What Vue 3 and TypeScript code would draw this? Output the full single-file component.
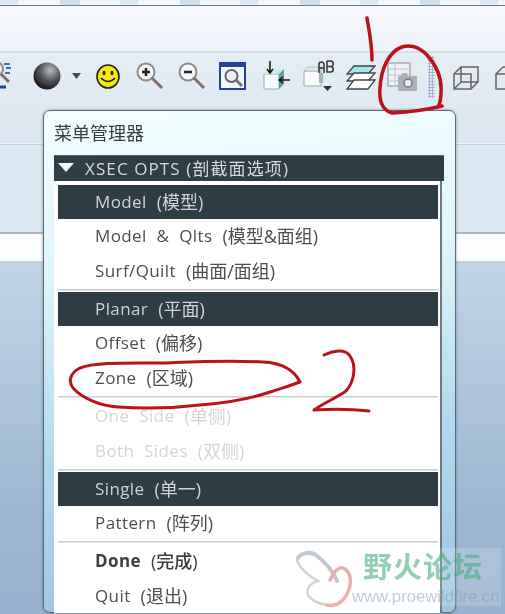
<script setup lang="ts">
interface Row { name: string; cn: string; kind?: 'on' | 'off' | 'bold'; sep?: boolean }
const rows: Row[] = [
  { name: 'Model', cn: '(模型)', kind: 'on' },
  { name: 'Model & Qlts', cn: '(模型&面组)' },
  { name: 'Surf/Quilt', cn: '(曲面/面组)', sep: true },
  { name: 'Planar', cn: '(平面)', kind: 'on' },
  { name: 'Offset', cn: '(偏移)' },
  { name: 'Zone', cn: '(区域)', sep: true },
  { name: 'One Side', cn: '(单侧)', kind: 'off' },
  { name: 'Both Sides', cn: '(双侧)', kind: 'off', sep: true },
  { name: 'Single', cn: '(单一)', kind: 'on' },
  { name: 'Pattern', cn: '(阵列)', sep: true },
  { name: 'Done', cn: '(完成)', kind: 'bold' },
  { name: 'Quit', cn: '(退出)' }
]
</script>

<template>
  <div class="page">
    <div class="bands">
      <div class="b-top"></div>
      <div class="b-white"></div>
      <div class="b-tool">
        <div class="icons">
          <svg width="28" height="36" viewBox="0 0 28 36"><circle cx="6" cy="10" r="7" fill="#eef2f5" stroke="#8d8d8d" stroke-width="2"/><path d="M11 15l8 8" stroke="#8a6a60" stroke-width="3"/><path d="M14 5h6M16 9h5M15 14h5" stroke="#3f6fb0" stroke-width="2"/><path d="M10 28h6" stroke="#1c3f9c" stroke-width="3"/></svg>
          <svg width="28" height="28" class="sphere" viewBox="0 0 28 28"><defs><radialGradient id="sph" cx="62%" cy="30%" r="75%"><stop offset="0" stop-color="#b8bcc0"/><stop offset=".5" stop-color="#55585c"/><stop offset="1" stop-color="#111"/></radialGradient></defs><circle cx="14" cy="14" r="13.500" fill="url(#sph)"/></svg>
          <svg width="10" height="7" class="caret" viewBox="0 0 10 7"><path d="M0 0h9l-4.500 6z" fill="#3f4c5a"/></svg>
          <svg width="24" height="25" class="smile" viewBox="0 0 24 25"><ellipse cx="12" cy="12.500" rx="11" ry="11.500" fill="#f5ea10" stroke="#222" stroke-width="1.600"/><ellipse cx="8" cy="9" rx="1.500" ry="2.200" fill="#222"/><ellipse cx="16" cy="9" rx="1.500" ry="2.200" fill="#222"/><path d="M5 14q7 7 14 0" fill="none" stroke="#222" stroke-width="1.600"/></svg>
          <svg width="28" height="28" class="zp" viewBox="0 0 28 28"><circle cx="10" cy="10" r="8.500" fill="#f4f6f8" stroke="#8b8b8b" stroke-width="2"/><path d="M6 10h8M10 6v8" stroke="#222" stroke-width="2.500"/><path d="M16 16l10 10" stroke="#85706a" stroke-width="3"/></svg>
          <svg width="28" height="28" class="zm" viewBox="0 0 28 28"><circle cx="10" cy="10" r="8.500" fill="#f4f6f8" stroke="#8b8b8b" stroke-width="2"/><path d="M6 10h8" stroke="#222" stroke-width="2.500"/><path d="M16 16l10 10" stroke="#85706a" stroke-width="3"/></svg>
          <svg width="28" height="28" class="win" viewBox="0 0 28 28"><rect x="1" y="1" width="25" height="26" fill="#f4f6fa" stroke="#23478f" stroke-width="2"/><rect x="1" y="1" width="25" height="4" fill="#23478f"/><circle cx="12.500" cy="14" r="6" fill="#eef2f5" stroke="#666" stroke-width="2"/><path d="M17 18l6 6" stroke="#85706a" stroke-width="3"/></svg>
          <svg width="29" height="30" class="box" viewBox="0 0 29 30"><path d="M2 13h15v15H2z" fill="#fbfdfd" stroke="#9aa" /><path d="M2 13l5-5h15l-5 5z" fill="#cfe9e9"/><path d="M17 13l5-5v15l-5 5z" fill="#5d9f9f"/><path d="M8 0v11M5 8l3 4 3-4" stroke="#111" stroke-width="1.500" fill="none"/><path d="M28 19H17M21 16l-4 3 4 3" stroke="#111" stroke-width="1.500" fill="none"/></svg>
          <svg width="31" height="31" class="ab" viewBox="0 0 31 31"><path d="M1 11h17v15H1z" fill="#fbfdfd" stroke="#9aa"/><path d="M1 11l4-4h13v4z" fill="#d8ecec" stroke="#aaa" stroke-width=".6"/><path d="M16 13h4v10h-4z" fill="#9fb6b6"/><path d="M16 13V4.500a2.500 2.500 0 015 0V13M16 8h5M24 1v11h3.500a2.500 2.500 0 000-5.500H24M27.500 6.500a2.500 2.500 0 000-5.500H24" fill="none" stroke="#333" stroke-width="1.500"/><path d="M20 26h9l-4.500 5z" fill="#333"/></svg>
          <svg width="30" height="26" class="layers" viewBox="0 0 30 26"><path d="M8 1h21l-7 8H1z" fill="#a2e7ee" stroke="#444" stroke-width="1.300"/><path d="M8 8h21l-7 8H1l7-8z" fill="#fff" stroke="#444" stroke-width="1.300"/><path d="M8 15h21l-7 9H1z" fill="#fff" stroke="#444" stroke-width="1.300"/></svg>
          <svg width="32" height="30" class="photo" viewBox="0 0 32 30"><path d="M1 1h22v23H1z" fill="#eef3f6" stroke="#a4adb4" stroke-width="1.500"/><path d="M1 7h22M1 13h22M1 19h22M8 1v23" stroke="#bcc5cb"/><path d="M11 14h3l1-3h5l1 3h9v15H11z" fill="#a9b0b6"/><circle cx="21" cy="21" r="4" fill="#e8ecef" stroke="#777" stroke-width="1.500"/></svg>
          <div class="dots"></div>
          <svg width="26" height="24" class="cube" viewBox="0 0 26 24"><path d="M1 8h17v15H1zM1 8l7-7h17v15l-7 7M8 1v15h17M1 23l7-7" fill="none" stroke="#666" stroke-width="1.500"/></svg>
          <svg width="26" height="24" class="cube2" viewBox="0 0 26 24"><path d="M1 8h17v15H1zM1 8l7-7h17v15l-7 7" fill="none" stroke="#666" stroke-width="1.500"/></svg>
        </div>
      </div>
      <div class="b-pale"></div>
      <div class="b-input"></div>
      <div class="b-blue"></div>
    </div>

    <section class="dialog">
      <h1 class="title">菜单管理器</h1>
      <div class="head"><span class="tri"></span><span class="head-text">XSEC OPTS (剖截面选项)</span></div>
      <ul class="panel">
        <li v-for="r in rows" :key="r.name" class="row" :class="[r.kind, { sep: r.sep }]"><span class="name">{{ r.name }}</span><span class="cn-part">{{ r.cn }}</span></li>
      </ul>
    </section>

    <svg class="ink" width="505" height="614" viewBox="0 0 505 614" fill="none" stroke="#bb121b" stroke-linecap="round" stroke-linejoin="round">
      <path d="M367 18C369 30 372 44 372 60" stroke-width="3.500"/>
      <path d="M442 106C430 109 410 112 392 113C382 110 379 100 380 88C381 70 388 52 402 47C412 44 420 48 427 55C436 65 442 78 441 92C441 98 441 102 438 107" stroke-width="3.500"/>
      <path d="M300 382C295 372 285 363 263 362C225 360 190 362 163 363C125 363 95 362 80 368C70 373 68 381 73 388C82 398 100 406 118 407C145 409 175 408 200 405C225 403 250 399 270 392C282 388 292 385 300 382" stroke-width="3"/>
      <path d="M324 355C332 351 345 348 350 356C357 366 354 382 346 391C336 398 322 404 314 410C330 409 352 409 369 411" stroke-width="3"/>
    </svg>

    <div class="mark">
      <svg class="fly" width="58" height="58" viewBox="0 0 58 58" fill="none" stroke-linecap="round">
        <path d="M1 9C3 2 14 0 20 4C30 12 38 22 41 30" stroke="#c0c8d0" stroke-width="4"/>
        <path d="M1 9C4 18 14 26 22 30C14 32 10 38 12 44C16 50 24 53 31 54" stroke="#cfd5da" stroke-width="2.500"/>
        <path d="M34 29C38 20 44 14 49 18C57 24 56 38 47 49C42 54 36 55 31 54" stroke="#eeaeae" stroke-width="3.500"/>
      </svg>
      <div class="mark-box">
        <div class="cn">野火论坛</div>
        <div class="en">www.proewildfire.cn</div>
      </div>
    </div>
  </div>
</template>

<style scoped>
.page {
  position: relative;
  width: 505px;
  height: 614px;
  overflow: hidden;
  font-family: "Open Sans", "Noto Sans CJK SC", sans-serif;
}
.bands { display: flex; flex-direction: column; height: 100%; filter: blur(0.4px); }
.b-top {
  height: 5px;
  border-bottom: 1px solid #6f7c88;
  background: repeating-linear-gradient(90deg, #dce9f3 0 18px, #f3f8fb 18px 60px, #cfdfeb 60px 80px, #eef5f9 80px 120px);
}
.b-white { height: 45px; background: linear-gradient(#f6f9fd, #eef2f9); border-bottom: 2px solid #d6dfe8; }
.b-tool { height: 90px; background: linear-gradient(#e6edf4, #dbe7f1); border-bottom: 1px solid #f1f5f8; }
.icons { display: flex; align-items: flex-start; padding-top: 6px; margin-left: -10px; }
.icons > * { flex-shrink: 0; }
.sphere { margin: 3px 0 0 15px; }
.caret { margin: 14px 0 0 11px; }
.smile { margin: 5px 0 0 14px; }
.zp { margin: 3px 0 0 16px; }
.zm { margin: 3px 0 0 14px; }
.win { margin: 3px 0 0 13px; }
.box { margin: 2px 0 0 15px; }
.ab { margin: 1px 0 0 12px; }
.layers { margin: 6px 0 0 12px; }
.photo { margin: 3px 0 0 11px; }
.dots {
  width: 7px;
  height: 42px;
  margin: -3px 0 0 9px;
  background: radial-gradient(circle, #a3b7ce 1px, transparent 1.300px) 0 0 / 3px 3px;
}
.cube { margin: 7px 0 0 18px; }
.cube2 { margin: 7px 0 0 16px; }
.b-pale { height: 87px; background: #dce8f2; border-top: 1px solid #c3d2de; border-bottom: 2px solid #a7b6c3; }
.b-input { height: 27px; background: #fbfcfd; border-bottom: 2px solid #c2d1dd; }
.b-blue { flex: 1; background: linear-gradient(#c0d4e6, #9db8d4 70%, #96b2d0); }

.dialog {
  position: absolute;
  left: 43px;
  top: 110px;
  width: 413px;
  height: 503px;
  box-sizing: border-box;
  padding: 0 10px;
  border: 1px solid #5c6a72;
  border-radius: 7px;
  background: linear-gradient(175deg, #f2fdfe 0, #dff6fa 30%, #b4dcef 62%, #9cc4e4 100%);
  box-shadow: 0 0 3px rgba(40, 55, 70, .5);
  filter: blur(0.35px);
}
.title {
  margin: 0;
  height: 44px;
  padding-top: 10px;
  box-sizing: border-box;
  font-size: 18px;
  line-height: 24px;
  font-weight: 400;
  color: #3d3d3d;
}
.head {
  display: flex;
  align-items: center;
  height: 26px;
  width: 390px;
  padding: 0 0 2px 4px;
  box-sizing: border-box;
  background: #2f3d45;
  border-top: 1px solid #5a6870;
  color: #d6dadc;
  font-size: 17px;
  letter-spacing: 1.100px;
  white-space: pre;
}
.tri {
  width: 0;
  height: 0;
  margin-right: 11px;
  border-left: 8px solid transparent;
  border-right: 8px solid transparent;
  border-top: 9px solid #f2f4f5;
}
.panel {
  list-style: none;
  margin: 0;
  width: 388px;
  height: 432px;
  padding: 4px 2px 0 4px;
  box-sizing: border-box;
  background: #fff;
  border-right: 2px solid #6f7a80;
}
.row {
  display: flex;
  gap: 10px;
  height: 35px;
  line-height: 34px;
  padding-left: 37px;
  font-size: 17px;
  letter-spacing: .4px;
  word-spacing: 5px;
  color: #4b4f52;
  white-space: nowrap;
}
.cn-part { font-size: 18px; letter-spacing: 0; }
.row.on { background: #2e3c44; color: #cfd3d5; height: 34px; }
.row.off { color: #d3d6d8; }
.row.bold { font-weight: 700; color: #3a3f44; }
.row.bold .cn-part { font-weight: 500; }
.row.sep { box-shadow: 0 1.500px 0 #ccc; margin-bottom: 3px; }

.ink { position: absolute; left: 0; top: 0; filter: blur(0.3px); }

.mark { position: absolute; left: 296px; top: 548px; display: flex; align-items: flex-start; filter: blur(0.4px); }
.fly { margin-top: 3px; flex-shrink: 0; }
.mark-box {
  margin-left: 5px;
  width: 142px;
  height: 58px;
  padding-left: 4px;
  box-sizing: border-box;
  background: rgba(255, 255, 255, .18);
}
.cn {
  font-family: "Noto Sans CJK SC", sans-serif;
  font-size: 29px;
  font-weight: 700;
  line-height: 34px;
  letter-spacing: 1px;
  color: rgba(70, 170, 125, .58);
  white-space: nowrap;
}
.en {
  margin: 6px 0 0 -11px;
  font-family: "Liberation Sans", sans-serif;
  font-size: 16.700px;
  line-height: 18px;
  color: rgba(130, 155, 180, .5);
  white-space: nowrap;
}
</style>

<style>
html, body { margin: 0; background: #9db8d4; }
</style>
